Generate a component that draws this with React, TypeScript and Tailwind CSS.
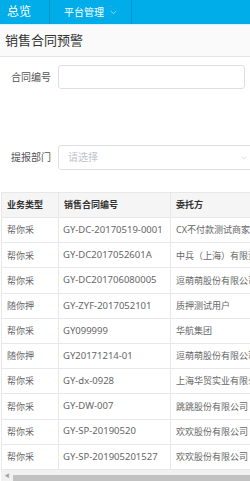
import { ChevronDown } from 'lucide-react'

const rows = [
  ['帮你采', 'GY-DC-20170519-0001', 'CX不付款测试商家'],
  ['帮你采', 'GY-DC2017052601A', '中兵（上海）有限责任公司'],
  ['帮你采', 'GY-DC201706080005', '逗萌萌股份有限公司'],
  ['随你押', 'GY-ZYF-2017052101', '质押测试用户'],
  ['帮你采', 'GY099999', '华航集团'],
  ['随你押', 'GY20171214-01', '逗萌萌股份有限公司'],
  ['帮你采', 'GY-dx-0928', '上海华贸实业有限公司'],
  ['帮你采', 'GY-DW-007', '跳跳股份有限公司'],
  ['帮你采', 'GY-SP-20190520', '欢欢股份有限公司'],
  ['帮你采', 'GY-SP-201905201527', '欢欢股份有限公司'],
]

export default function App() {
  return (
    <div
      className="w-[250px] h-[481px] overflow-hidden bg-white flex flex-col"
      style={{ fontFamily: '"Noto Sans", "Noto Sans CJK SC", sans-serif' }}
    >
      {/* top nav */}
      <div className="h-[25px] shrink-0 bg-[#00ade8] border-b border-[#d6f1fb] flex items-stretch text-white">
        <div className="w-[50px] border-r border-[#0096cf] flex items-center pl-[7px] text-[12px]">总览</div>
        <div className="w-[82px] border-r border-[#0096cf] flex items-center pl-[14px] text-[10px] gap-[5px]">
          <span>平台管理</span>
          <ChevronDown className="w-[9px] h-[9px]" strokeWidth={1.5} />
        </div>
      </div>

      {/* page title */}
      <div className="h-[32px] shrink-0 bg-[#fafafa] border-b border-[#e6e6e6] flex items-center pl-[5px] text-[13px] text-[#333]">
        销售合同预警
      </div>

      {/* filters */}
      <div className="shrink-0 pt-[8px] pl-[11px]">
        <div className="flex items-center h-[24px]">
          <span className="w-[47px] text-[10px] text-[#555]">合同编号</span>
          <div className="w-[187px] h-[24px] border border-[#dcdfe6] rounded-[3px] bg-white" />
        </div>
        <div className="flex items-center h-[25px] mt-[56px]">
          <span className="w-[47px] shrink-0 text-[10px] text-[#555]">提报部门</span>
          <div className="w-[200px] shrink-0 h-[25px] border border-[#dcdfe6] rounded-[3px] bg-white flex items-center pl-[9px] text-[10px] text-[#c0c4cc]">
            <span className="flex-1">请选择</span>
            <ChevronDown className="w-[8px] h-[8px] text-[#c0c4cc] mr-[9px]" strokeWidth={1.5} />
          </div>
        </div>
      </div>

      {/* table */}
      <div className="mt-[22px] pl-[1px] flex-1 overflow-hidden flex flex-col">
        <div className="w-[330px] border-l border-t border-[#e8e8e8] text-[9px]">
          <div className="grid grid-cols-[57px_112px_161px] h-[25px] bg-[#f5f5f5] border-b border-[#e8e8e8] font-bold text-[#333]">
            <div className="flex items-center pl-[5px] border-r border-[#e8e8e8]">业务类型</div>
            <div className="flex items-center pl-[5px] border-r border-[#e8e8e8]">销售合同编号</div>
            <div className="flex items-center pl-[5px]">委托方</div>
          </div>
          {rows.map((r, i) => (
            <div
              key={i}
              className="grid grid-cols-[57px_112px_161px] h-[25.2px] border-b border-[#e8e8e8] text-[#666]"
            >
              <div className="flex items-center pl-[5px] border-r border-[#e8e8e8]">{r[0]}</div>
              <div className="flex items-center pl-[4px] border-r border-[#e8e8e8] text-[9.5px] whitespace-nowrap">{r[1]}</div>
              <div className="flex items-center pl-[5px] whitespace-nowrap overflow-hidden">{r[2]}</div>
            </div>
          ))}
        </div>
        {/* horizontal scrollbar */}
        <div className="h-[11px] bg-[#f1f1f1] flex items-end">
          <div className="w-[12px] h-full flex items-center justify-center text-[5px] text-[#a3a3a3]">◀</div>
          <div className="flex-1 h-[6px] bg-[#c1c1c1]" />
        </div>
      </div>
    </div>
  )
}
